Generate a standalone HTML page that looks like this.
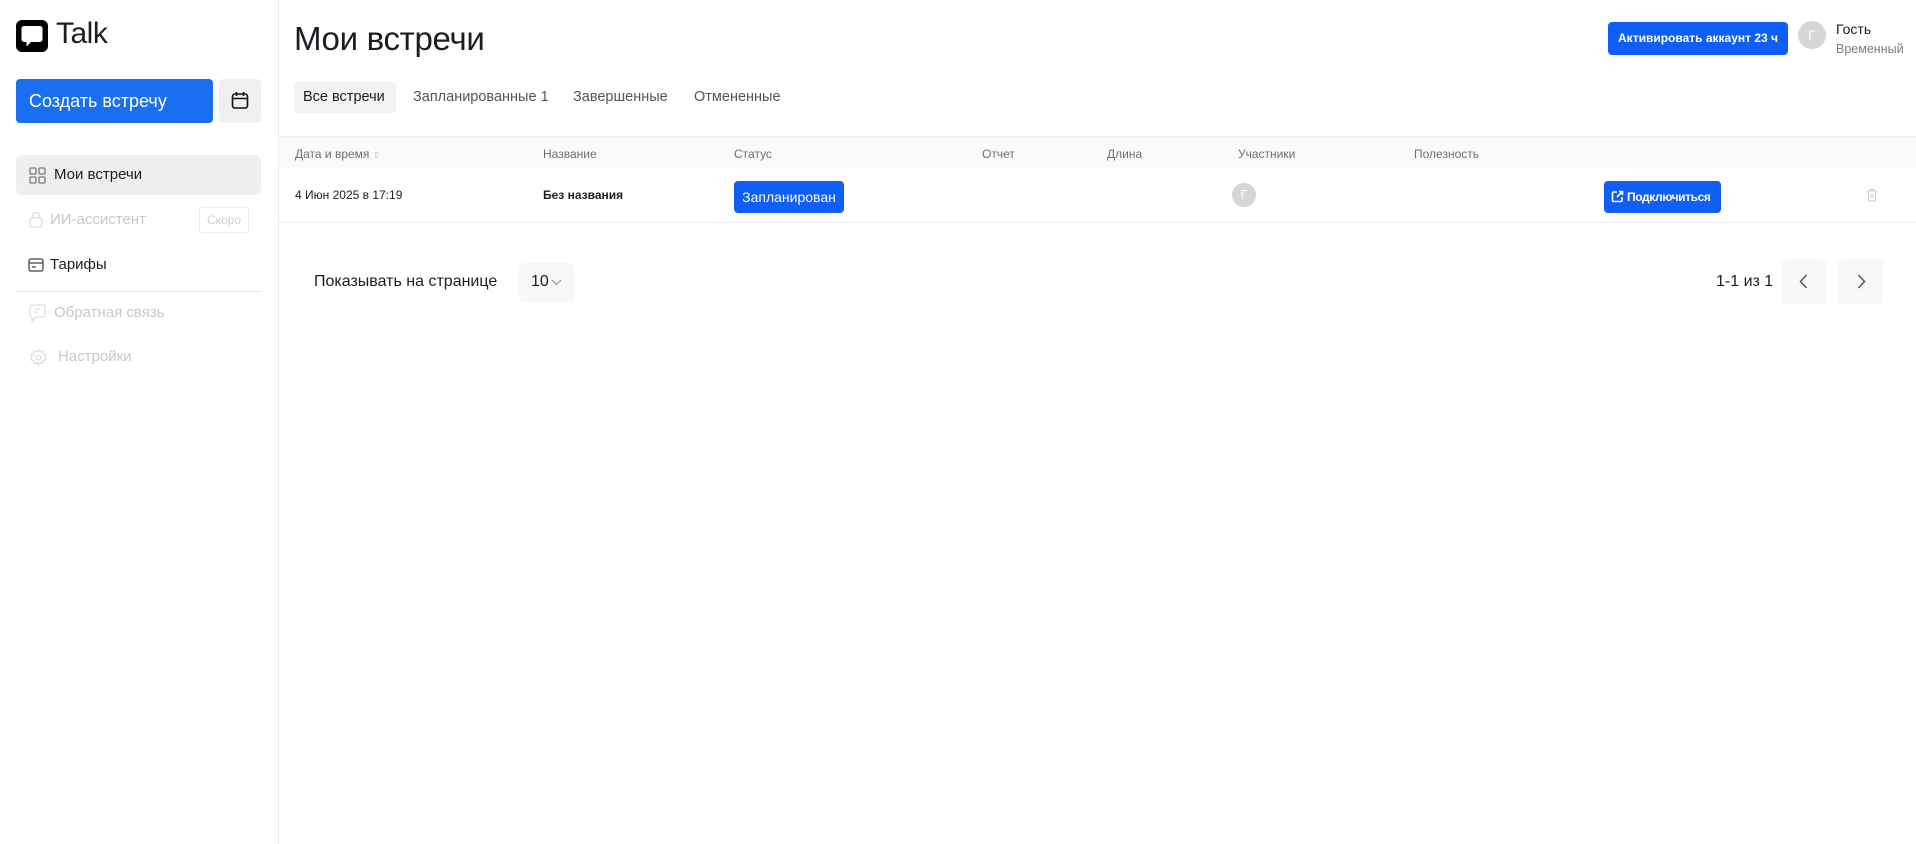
<!DOCTYPE html>
<html><head><meta charset="utf-8"><style>
*{box-sizing:border-box;margin:0;padding:0}
body{width:1916px;height:844px;background:#fff;font-family:"Liberation Sans",sans-serif;color:#1a1d21;position:relative;overflow:hidden}
.a{position:absolute}
.sb{left:0;top:0;width:279px;height:844px;border-right:1px solid #ececec}
.btn{background:#1469f0;color:#fff;border-radius:4px}
.nav{font-size:15px;display:flex;align-items:center}
.muted{color:#c8c8c8}
.th{font-size:12px;color:#6b6f75;top:147px}
</style></head><body>
<div class="a sb"></div>
<svg class="a" style="left:16px;top:20px" width="32" height="32" viewBox="0 0 32 32"><rect width="32" height="32" rx="6" fill="#000"/><path d="M8 6h16a2.5 2.5 0 0 1 2.5 2.5v11a2.5 2.5 0 0 1-2.5 2.5h-9l-4.5 4.5V22H8a2.5 2.5 0 0 1-2.5-2.5v-11A2.5 2.5 0 0 1 8 6z" fill="#fff"/></svg>
<div class="a" style="left:56px;top:17px;font-size:30px;letter-spacing:-0.5px">Talk</div>
<div class="a btn" style="left:16px;top:79px;width:197px;height:44px;font-size:18px;line-height:44px;padding-left:13px;background:#1a6ff0">Создать встречу</div>
<div class="a" style="left:219px;top:79px;width:42px;height:44px;background:#f0f0f0;border-radius:4px"></div>
<svg class="a" style="left:231px;top:91px" width="18" height="19" viewBox="0 0 18 19" fill="none" stroke="#111" stroke-width="1.6"><rect x="1.5" y="3" width="15" height="14" rx="2.5"/><path d="M1.5 7.5h15M5.5 1v4M12.5 1v4"/></svg>
<div class="a" style="left:16px;top:155px;width:245px;height:40px;background:#efefef;border-radius:6px"></div>
<svg class="a" style="left:29px;top:167px" width="17" height="17" viewBox="0 0 17 17" fill="none" stroke="#777" stroke-width="1.3"><rect x="1" y="1" width="6" height="6" rx="1"/><rect x="10" y="1" width="6" height="6" rx="1"/><rect x="1" y="10" width="6" height="6" rx="1"/><rect x="10" y="10" width="6" height="6" rx="1"/></svg>
<div class="a nav" style="left:54px;top:166px">Мои встречи</div>
<svg class="a" style="left:29px;top:211px" width="14" height="17" viewBox="0 0 14 17" fill="none" stroke="#ddd" stroke-width="1.3"><rect x="1" y="7" width="12" height="9" rx="2"/><path d="M3.5 7V5a3.5 3.5 0 0 1 7 0v2"/></svg>
<div class="a nav muted" style="left:50px;top:211px">ИИ-ассистент</div>
<div class="a" style="left:199px;top:207px;width:50px;height:26px;border:1px solid #eee;border-radius:3px;font-size:12px;color:#d0d0d0;text-align:center;line-height:24px">Скоро</div>
<svg class="a" style="left:28px;top:258px" width="16" height="14" viewBox="0 0 16 14" fill="none" stroke="#444" stroke-width="1.3"><rect x="1" y="1" width="14" height="12" rx="2"/><path d="M1 5h14M4 9h4"/></svg>
<div class="a nav" style="left:50px;top:256px">Тарифы</div>
<div class="a" style="left:16px;top:291px;width:245px;height:1px;background:#e6e6e6"></div>
<svg class="a" style="left:29px;top:304px" width="17" height="18" viewBox="0 0 17 18" fill="none" stroke="#ddd" stroke-width="1.3"><path d="M3 1h11a2 2 0 0 1 2 2v8a2 2 0 0 1-2 2H7l-4 4v-4a2 2 0 0 1-2-2V3a2 2 0 0 1 2-2zM5 5h6M5 8h4"/></svg>
<div class="a nav muted" style="left:54px;top:304px">Обратная связь</div>
<svg class="a" style="left:29px;top:348px" width="19" height="19" viewBox="0 0 24 24" fill="none" stroke="#ddd" stroke-width="1.6"><circle cx="12" cy="12" r="3"/><path d="M12 2l2 3 3.5-1 .5 3.5 3.5 1-1.5 3.5 1.5 3-3.5 1-.5 3.5-3.5-1-2 3-2-3-3.5 1-.5-3.5-3.5-1 1.5-3.5L2.5 8.5 6 7.5l.5-3.5L10 5z"/></svg>
<div class="a nav muted" style="left:58px;top:348px">Настройки</div>

<div class="a" style="left:294px;top:20px;font-size:33px;letter-spacing:-0.3px">Мои встречи</div>
<div class="a btn" style="left:1608px;top:22px;width:180px;height:33px;font-size:12px;font-weight:bold;text-align:center;line-height:33px;background:#0f5ef7">Активировать аккаунт 23 ч</div>
<div class="a" style="left:1798px;top:21px;width:28px;height:28px;border-radius:50%;background:#d5d6d8;color:#fff;font-size:14px;text-align:center;line-height:28px">Г</div>
<div class="a" style="left:1836px;top:21px;font-size:14px">Гость</div>
<div class="a" style="left:1836px;top:42px;font-size:12.5px;color:#7a7d82">Временный</div>

<div class="a" style="left:294px;top:82px;width:102px;height:31px;background:#f2f2f2;border-radius:4px"></div>
<div class="a" style="left:303px;top:89px;font-size:14.5px">Все встречи</div>
<div class="a" style="left:413px;top:89px;font-size:14.5px;color:#555">Запланированные 1</div>
<div class="a" style="left:573px;top:89px;font-size:14.5px;color:#555">Завершенные</div>
<div class="a" style="left:694px;top:89px;font-size:14.5px;color:#555">Отмененные</div>

<div class="a" style="left:279px;top:136px;width:1637px;height:33px;background:#fafafa;border-top:1px solid #f0f0f0"></div>
<div class="a th" style="left:295px">Дата и время <span style="color:#ccc;font-size:9px">⇕</span></div>
<div class="a th" style="left:543px">Название</div>
<div class="a th" style="left:734px">Статус</div>
<div class="a th" style="left:982px">Отчет</div>
<div class="a th" style="left:1107px">Длина</div>
<div class="a th" style="left:1238px">Участники</div>
<div class="a th" style="left:1414px">Полезность</div>
<div class="a" style="left:279px;top:222px;width:1637px;height:1px;background:#eeeeee"></div>
<div class="a" style="left:295px;top:188px;font-size:12px">4 Июн 2025 в 17:19</div>
<div class="a" style="left:543px;top:188px;font-size:12px;font-weight:bold">Без названия</div>
<div class="a btn" style="left:734px;top:181px;width:110px;height:32px;font-size:14px;line-height:32px;text-align:center;background:#0f5ef7">Запланирован</div>
<div class="a" style="left:1232px;top:183px;width:24px;height:24px;border-radius:50%;background:#d5d6d8;color:#fff;font-size:13px;text-align:center;line-height:24px">Г</div>
<div class="a btn" style="left:1604px;top:181px;width:117px;height:32px;font-size:12px;font-weight:bold;letter-spacing:-0.4px;line-height:32px;padding-left:23px;background:#0f5ef7">Подключиться</div>
<svg class="a" style="left:1611px;top:190px" width="13" height="13" viewBox="0 0 13 13" fill="none" stroke="#fff" stroke-width="1.6"><path d="M6 2H2.5a1 1 0 0 0-1 1v7.5a1 1 0 0 0 1 1H10a1 1 0 0 0 1-1V7M8 1.5h3.5V5M11.5 1.5L6 7"/></svg>
<svg class="a" style="left:1866px;top:188px" width="12" height="14" viewBox="0 0 12 14" fill="none" stroke="#d4d4d4" stroke-width="1.2"><path d="M1 3h10M4 3V1.5h4V3M2 3l.7 10h6.6L10 3M5 6v4M7 6v4"/></svg>

<div class="a" style="left:314px;top:273px;font-size:16px">Показывать на странице</div>
<div class="a" style="left:519px;top:263px;width:55px;height:39px;background:#f7f7f7;border-radius:4px"></div>
<div class="a" style="left:531px;top:273px;font-size:16px">10</div>
<svg class="a" style="left:551px;top:279px" width="11" height="7" viewBox="0 0 11 7" fill="none" stroke="#999" stroke-width="1.2"><path d="M1 1l4.5 4.5L10 1"/></svg>
<div class="a" style="left:1716px;top:273px;font-size:16px">1-1 из 1</div>
<div class="a" style="left:1782px;top:259px;width:44px;height:45px;background:#f8f8f8;border-radius:4px"></div>
<div class="a" style="left:1838px;top:259px;width:45px;height:45px;background:#f8f8f8;border-radius:4px"></div>
<svg class="a" style="left:1799px;top:274px" width="9" height="15" viewBox="0 0 9 15" fill="none" stroke="#555" stroke-width="1.5"><path d="M7.5 1L1.5 7.5l6 6.5"/></svg>
<svg class="a" style="left:1857px;top:274px" width="9" height="15" viewBox="0 0 9 15" fill="none" stroke="#555" stroke-width="1.5"><path d="M1.5 1l6 6.5-6 6.5"/></svg>
</body></html>
